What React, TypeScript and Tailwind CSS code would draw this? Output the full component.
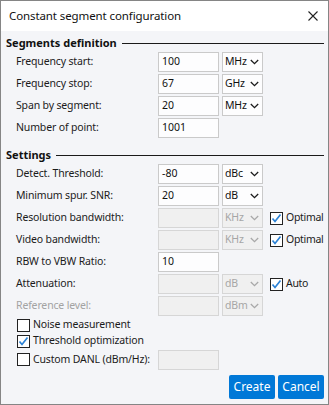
import React from "react";

const FONT = { fontFamily: '"Noto Sans", "Segoe UI", sans-serif' };

function Chevron({ disabled }: { disabled?: boolean }) {
  return (
    <svg width="9" height="6" viewBox="0 0 9 6" className="shrink-0">
      <polyline
        points="0.8,1 4.5,4.6 8.2,1"
        fill="none"
        stroke={disabled ? "#a8a8a8" : "#1a1a1a"}
        strokeWidth="1.3"
      />
    </svg>
  );
}

function Input({ value, disabled }: { value?: string; disabled?: boolean }) {
  return (
    <div
      className={
        "w-[61px] h-[20px] shrink-0 border flex items-center pl-[3px] text-[10.5px] " +
        (disabled ? "bg-[#f0f0f0] border-[#d6d6d6]" : "bg-[#fdfdfe] border-[#cacaca] text-[#111]")
      }
    >
      {value}
    </div>
  );
}

function Select({ value, disabled }: { value: string; disabled?: boolean }) {
  return (
    <div
      className={
        "w-[41px] h-[20px] ml-[3px] shrink-0 border flex items-center justify-between pl-[2px] pr-[3px] text-[10.5px] tracking-[-0.2px] " +
        (disabled
          ? "bg-[#f0f0f0] border-[#d6d6d6] text-[#a6a6a6]"
          : "bg-[#fdfdfe] border-[#cacaca] text-[#111]")
      }
    >
      <span>{value}</span>
      <Chevron disabled={disabled} />
    </div>
  );
}

function Check({ checked }: { checked?: boolean }) {
  return (
    <div className="w-[13px] h-[13px] shrink-0 border border-[#222] bg-white flex items-center justify-center">
      {checked && (
        <svg width="11" height="11" viewBox="0 0 11 11">
          <polyline
            points="1.5,5.5 4,8.5 9.5,1.5"
            fill="none"
            stroke="#2b82d6"
            strokeWidth="1.7"
          />
        </svg>
      )}
    </div>
  );
}

function Header({ text, className }: { text: string; className?: string }) {
  return (
    <div className={"h-[20px] flex items-center " + (className || "")}>
      <span className="font-bold text-[11px] text-[#111] leading-none pt-[2px] whitespace-nowrap">
        {text}
      </span>
      <div className="flex-1 h-px bg-[#1a1a1a] ml-[5px] mt-[4px]" />
    </div>
  );
}

function Row({
  label,
  value,
  unit,
  disabled,
  labelDisabled,
  check,
}: {
  label: string;
  value?: string;
  unit?: string;
  disabled?: boolean;
  labelDisabled?: boolean;
  check?: string;
}) {
  return (
    <div className="h-[22px] flex items-center">
      <div
        className={
          "w-[152px] pl-[10px] shrink-0 text-[10.5px] tracking-[-0.15px] whitespace-nowrap " +
          (labelDisabled ? "text-[#a3a3a3]" : "text-[#1b1b1b]")
        }
      >
        {label}
      </div>
      <Input value={value} disabled={disabled} />
      {unit && <Select value={unit} disabled={disabled} />}
      {check && (
        <div className="flex items-center ml-[7px]">
          <Check checked />
          <span className="ml-[3px] text-[10.5px] tracking-[-0.3px] text-[#1b1b1b] whitespace-nowrap">
            {check}
          </span>
        </div>
      )}
    </div>
  );
}

function CheckRow({
  label,
  checked,
  className,
  children,
}: {
  label: string;
  checked?: boolean;
  className?: string;
  children?: React.ReactNode;
}) {
  return (
    <div className={"flex items-center " + (className || "")}>
      <div className="w-[152px] pl-[11px] flex items-center shrink-0">
        <Check checked={checked} />
        <span className="ml-[3px] text-[10.5px] tracking-[-0.15px] text-[#1b1b1b] whitespace-nowrap">
          {label}
        </span>
      </div>
      {children}
    </div>
  );
}

export default function App() {
  return (
    <div
      className="w-[329px] h-[405px] border border-[#858585] bg-[#f4f5f8] flex flex-col overflow-hidden"
      style={FONT}
    >
      <div className="h-[30px] bg-white flex items-center justify-between pl-[8px] pr-[10px] shrink-0">
        <span className="text-[11.5px] text-[#111] tracking-[-0.1px]">Constant segment configuration</span>
        <svg width="10" height="10" viewBox="0 0 10 10">
          <path d="M0.5 0.5 L9.5 9.5 M9.5 0.5 L0.5 9.5" stroke="#222" strokeWidth="1.1" />
        </svg>
      </div>
      <div className="flex flex-col pl-[5px] pr-[4px]">
        <Header text="Segments definition" />
        <Row label="Frequency start:" value="100" unit="MHz" />
        <Row label="Frequency stop:" value="67" unit="GHz" />
        <Row label="Span by segment:" value="20" unit="MHz" />
        <Row label="Number of point:" value="1001" />
        <Header text="Settings" className="mt-[4px]" />
        <Row label="Detect. Threshold:" value="-80" unit="dBc" />
        <Row label="Minimum spur. SNR:" value="20" unit="dB" />
        <Row label="Resolution bandwidth:" unit="KHz" disabled check="Optimal" />
        <Row label="Video bandwidth:" unit="KHz" disabled check="Optimal" />
        <Row label="RBW to VBW Ratio:" value="10" />
        <Row label="Attenuation:" unit="dB" disabled check="Auto" />
        <Row label="Reference level:" unit="dBm" disabled labelDisabled />
        <CheckRow label="Noise measurement" className="h-[16px]" />
        <CheckRow label="Threshold optimization" checked className="h-[16px]" />
        <CheckRow label="Custom DANL (dBm/Hz):" className="h-[21px]">
          <Input disabled />
        </CheckRow>
        <div className="flex justify-end gap-[3px] mt-[5px]">
          <button className="w-[46px] h-[24px] bg-[#0078d7] text-white text-[12px] rounded-[2px]">
            Create
          </button>
          <button className="w-[46px] h-[24px] bg-[#0078d7] text-white text-[12px] rounded-[2px]">
            Cancel
          </button>
        </div>
      </div>
    </div>
  );
}
